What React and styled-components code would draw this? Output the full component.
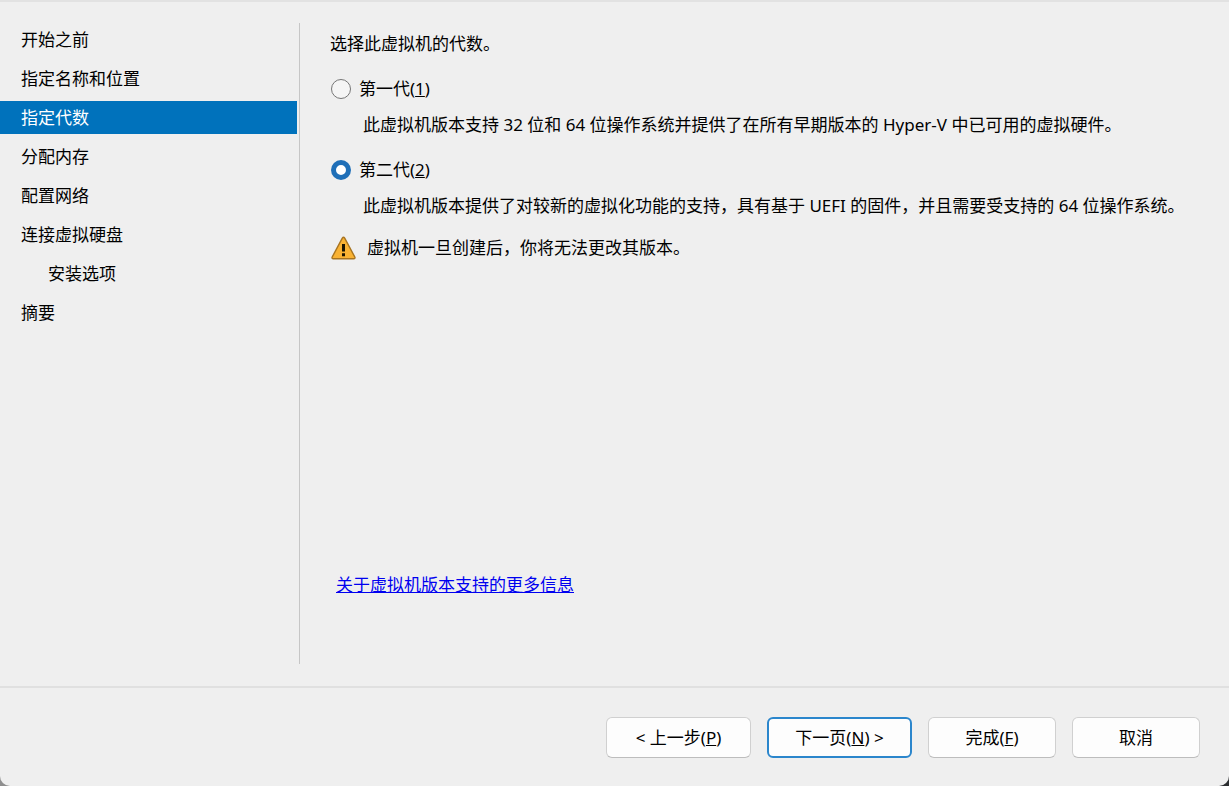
import React, { useState } from "react";
import styled, { createGlobalStyle } from "styled-components";

const GlobalStyle = createGlobalStyle`
  *,
  *::before,
  *::after {
    box-sizing: border-box;
  }
  body {
    margin: 0;
    background: linear-gradient(90deg, #8f8f8f, #2b2d30);
    color: #000;
    font-family: "Noto Sans", "Noto Sans CJK SC", sans-serif;
    font-size: 17px;
    line-height: 24px;
  }
`;
const Wizard = styled.div`
  display: flex;
  flex-direction: column;
  min-height: 100vh;
  border-top: 2px solid #e2e2e2;
  border-radius: 0 0 10px 10px;
  background: #efefef;
`;
const Body = styled.div`
  display: flex;
  flex: 1;
`;
const Sidebar = styled.nav`
  display: flex;
  flex: none;
  gap: 2px;
  width: 300px;
  padding: 21px 0 22px;
`;
const StepList = styled.ul`
  display: flex;
  flex: 1;
  flex-direction: column;
  gap: 6px;
  margin: 0;
  padding: 0;
  list-style: none;
`;
const StepLink = styled.a`
  display: block;
  height: 33px;
  padding-left: ${p => (p.$nested ? 48 : 21)}px;
  line-height: 34px;
  text-decoration: none;
  color: ${p => (p.$active ? "#fff" : "#000")};
  background: ${p => (p.$active ? "#0072bc" : "transparent")};
`;
const Divider = styled.div`
  width: 1px;
  background: #c6c6c6;
`;
const Content = styled.main`
  display: flex;
  flex: 1;
  flex-direction: column;
  padding: 30px 30px 89px;
`;
const Title = styled.p`
  margin: 0 0 21px;
`;
const Options = styled.div`
  display: flex;
  flex-direction: column;
  gap: 21px;
  margin-bottom: 18px;
`;
const OptionLabel = styled.label`
  display: flex;
  align-items: center;
  gap: 8px;
  margin-bottom: 12px;
`;
const Radio = styled.input`
  appearance: none;
  flex: none;
  width: 20px;
  height: 20px;
  margin: 0 0 0 1px;
  border: 1px solid #767676;
  border-radius: 50%;
  background: #f5f5f5;
  &:checked {
    border: 5px solid #1f6fb8;
    background: #fff;
  }
`;
const Description = styled.p`
  margin: 0 0 0 33px;
`;
const Warning = styled.p`
  display: flex;
  align-items: center;
  gap: 11px;
  margin: 0 0 0 1px;
`;
const MoreLink = styled.a`
  align-self: flex-start;
  margin-top: auto;
  margin-left: 6px;
  color: #0000f0;
`;
const Footer = styled.footer`
  display: flex;
  justify-content: flex-end;
  gap: 16px;
  padding: 29px 29px 28px;
  border-top: 2px solid #e0e0e0;
`;
const Button = styled.button`
  width: ${p => (p.$wide ? 145 : 128)}px;
  height: 41px;
  padding: 0;
  border: ${p => (p.$primary ? "2px solid #2b86cc" : "1px solid #d0d0d0")};
  border-bottom-color: ${p => (p.$primary ? "#2b86cc" : "#bdbdbd")};
  border-radius: 6px;
  background: #fdfdfd;
  color: #000;
  font: inherit;
`;

const steps = [
  { name: "开始之前" },
  { name: "指定名称和位置" },
  { name: "指定代数", active: true },
  { name: "分配内存" },
  { name: "配置网络" },
  { name: "连接虚拟硬盘" },
  { name: "安装选项", nested: true },
  { name: "摘要" }
];

const generations = [
  {
    id: "1",
    name: "第一代",
    text:
      "此虚拟机版本支持 32 位和 64 位操作系统并提供了在所有早期版本的 Hyper-V 中已可用的虚拟硬件。"
  },
  {
    id: "2",
    name: "第二代",
    text:
      "此虚拟机版本提供了对较新的虚拟化功能的支持，具有基于 UEFI 的固件，并且需要受支持的 64 位操作系统。"
  }
];

function WarningIcon() {
  return (
    <svg width="25" height="24" viewBox="0 0 25 24" aria-hidden="true">
      <path
        d="M11.3 2.2Q12.5.4 13.7 2.2L23.9 21.2Q24.3 22.8 22.7 22.8H2.3Q.7 22.8 1.1 21.2Z"
        fill="#f9b233"
        stroke="#a87420"
        strokeWidth="1.4"
      />
      <path d="M11 8h3v7.5h-3zM11 17.2h3v3h-3z" fill="#1c1400" />
    </svg>
  );
}

function App() {
  const [generation, setGeneration] = useState("2");
  return (
    <Wizard>
      <GlobalStyle />
      <Body>
        <Sidebar>
          <StepList>
            {steps.map(step => (
              <li key={step.name}>
                <StepLink
                  href="#"
                  $active={step.active}
                  $nested={step.nested}
                  aria-current={step.active ? "step" : undefined}
                >
                  {step.name}
                </StepLink>
              </li>
            ))}
          </StepList>
          <Divider />
        </Sidebar>
        <Content>
          <Title id="generation-title">选择此虚拟机的代数。</Title>
          <Options role="radiogroup" aria-labelledby="generation-title">
            {generations.map(item => (
              <div key={item.id}>
                <OptionLabel htmlFor={`generation-${item.id}`}>
                  <Radio
                    type="radio"
                    name="generation"
                    id={`generation-${item.id}`}
                    accessKey={item.id}
                    aria-describedby={`generation-text-${item.id}`}
                    checked={generation === item.id}
                    onChange={() => setGeneration(item.id)}
                  />
                  <span>
                    {item.name}(<u>{item.id}</u>)
                  </span>
                </OptionLabel>
                <Description id={`generation-text-${item.id}`}>
                  {item.text}
                </Description>
              </div>
            ))}
          </Options>
          <Warning>
            <WarningIcon />
            虚拟机一旦创建后，你将无法更改其版本。
          </Warning>
          <MoreLink href="#">关于虚拟机版本支持的更多信息</MoreLink>
        </Content>
      </Body>
      <Footer>
        <Button type="button" accessKey="p" $wide>
          &lt; 上一步(<u>P</u>)
        </Button>
        <Button type="button" accessKey="n" $wide $primary>
          下一页(<u>N</u>) &gt;
        </Button>
        <Button type="button" accessKey="f">
          完成(<u>F</u>)
        </Button>
        <Button type="button">取消</Button>
      </Footer>
    </Wizard>
  );
}
export default App;
